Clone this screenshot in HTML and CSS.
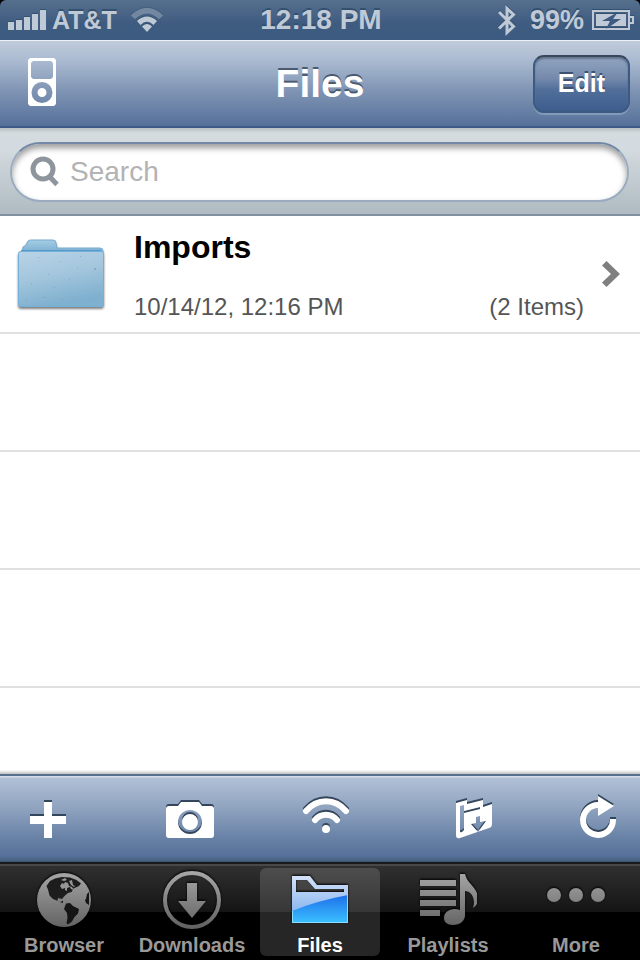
FILE: index.html
```html
<!DOCTYPE html>
<html lang="en">
<head>
<meta charset="utf-8">
<meta name="viewport" content="width=device-width, initial-scale=1">
<title>Files</title>
<link rel="stylesheet" href="styles.css">
</head>
<body>
<div class="status">
  <div class="status-side">
    <svg class="engraved" width="38" height="20" viewBox="0 0 38 20" aria-hidden="true"><path d="M0 12h6v8H0zM8 10h6v10H8zM16 7h6v13h-6zM24 4h6v16h-6zM32 0h6v20h-6z"/></svg>
    <span class="carrier">AT&amp;T</span>
    <svg class="engraved status-wifi" width="32" height="24" viewBox="0 0 32 24" aria-hidden="true">
      <path class="faded" d="M0 7.500C9-2.500 23-2.500 32 7.500L28 11C21 3.500 11 3.500 4 11z"/>
      <path d="M6 13C12 7 20 7 26 13L22.500 17C18.500 12.500 13.500 12.500 9.500 17zM11 18.500c3-3.500 7-3.500 10 0L16 24z"/>
    </svg>
  </div>
  <span class="clock">12:18 PM</span>
  <div class="status-side status-end">
    <svg class="engraved" width="18" height="31" viewBox="0 0 18 31" aria-hidden="true"><path class="blue" d="M1 7l14.500 14.500L9 27.500v-24l6.500 6L1 23.500"/></svg>
    <span class="percent">99%</span>
    <svg class="engraved" width="42" height="20" viewBox="0 0 42 20" aria-hidden="true">
      <path fill-rule="evenodd" d="M0 0h38v6h4v8h-4v6H0zM2 2v16h34V2zM38 8v4h2V8z"/>
      <path d="M4 4h30v12H4z"/>
      <path class="bolt" d="M26 2L10 11h8l-4 8 15-10h-8z"/>
    </svg>
  </div>
</div>

<header class="nav">
  <div class="nav-start">
    <button class="ipod" type="button" aria-label="Now playing">
      <svg width="28" height="48" viewBox="0 0 28 48"><path fill="#fff" fill-rule="evenodd" d="M2 0h24l2 2v44l-2 2H2l-2-2V2zM5 3L3 5v14l2 2h18l2-2V5l-2-2zM14 24a10.500 10.500 0 1 0 0 21 10.500 10.500 0 0 0 0-21zm0 6a4.500 4.500 0 1 1 0 9 4.500 4.500 0 0 1 0-9z"/></svg>
    </button>
  </div>
  <h1>Files</h1>
  <div class="nav-end"><button class="edit" type="button">Edit</button></div>
</header>

<form class="search" role="search">
  <label class="search-field">
    <svg width="30" height="32" viewBox="0 0 30 32" aria-hidden="true"><circle cx="13" cy="13" r="10"/><path d="M19.500 20.500L27 28.500"/></svg>
    <input type="search" placeholder="Search" aria-label="Search">
  </label>
</form>

<main class="files">
  <ul>
    <li><a class="row" href="#imports">
      <svg class="folder" width="90" height="72" viewBox="0 0 90 72" aria-hidden="true">
        <defs>
          <linearGradient id="front" x2=".3" y2="1"><stop stop-color="#b9d3e6"/><stop offset=".5" stop-color="#a3c6dd"/><stop offset="1" stop-color="#7fb0cf"/></linearGradient>
          <linearGradient id="back" x2="0" y2="1"><stop stop-color="#a5cde4"/><stop offset="1" stop-color="#6ea6cd"/></linearGradient>
        </defs>
        <path fill="url(#back)" stroke="#78acd0" d="M4 14l1-7 3-2 2-4q1-1 3-1h22q3 0 3 3l1 5h43q3 0 3 3v5z"/>
        <path fill="url(#front)" stroke="#74b0dc" d="M2.500 11.500h81q2 0 2 2v51q0 2-2 2h-81q-2 0-2-2v-51q0-2 2-2z"/>
        <path fill="none" stroke="#5698c7" d="M3 10.500h80"/>
        <path fill="#6f9fbd" opacity=".6" d="M20 17h1v1h-1zM42 21h1v1h-1zM62 16h1v1h-1zM76 28h2v2h-2zM30 34h1v1h-1zM51 39h1v1h-1zM13 43h1v1h-1zM68 50h1v1h-1zM25 57h2v1h-2zM8 60h1v1H8zM45 59h1v1h-1zM59 28h1v1h-1zM74 60h1v1h-1zM36 47h1v1h-1z"/>
      </svg>
      <span class="details">
        <strong>Imports</strong>
        <span class="meta"><span>10/14/12, 12:16 PM</span><span>(2 Items)</span></span>
      </span>
      <svg class="chevron" width="18" height="26" viewBox="0 0 18 26" aria-hidden="true"><path fill="#7f7f7f" d="M4.500 0L18 13 4.500 26 0 21.500 9 13 0 4.500z"/></svg>
    </a></li>
  </ul>
  <div class="empty-rows"></div>
</main>

<div class="toolbar" role="toolbar" aria-label="File actions">
  <button class="tool-add" type="button" aria-label="Add"><svg width="36" height="36" viewBox="0 0 36 36"><path d="M14 0h8v14h14v8H22v14h-8V22H0v-8h14z"/></svg></button>
  <button class="tool-camera" type="button" aria-label="Camera"><svg width="48" height="36" viewBox="0 0 48 36"><path fill-rule="evenodd" d="M12 4l3-4h18l3 4h9q3 0 3 3v26q0 3-3 3H3q-3 0-3-3V7q0-3 3-3zM24 8a12 12 0 1 0 0 24 12 12 0 0 0 0-24zm0 4a8 8 0 1 1 0 16 8 8 0 0 1 0-16z"/></svg></button>
  <button class="tool-wifi" type="button" aria-label="Wi-Fi sharing"><svg width="46" height="40" viewBox="0 0 46 40"><path class="arc" d="M3 13C14 0 32 0 43 13M12 22c6-7 16-7 22 0"/><circle cx="23" cy="31" r="4"/></svg></button>
  <button class="tool-folder" type="button" aria-label="Move to folder"><svg width="36" height="38" viewBox="0 0 36 38"><path fill-rule="evenodd" d="M0 3L11 0v4l16-4v7l9-3v20q0 3-3 4L4 38q-4 1-4-3zM4 6v25q0 2 2 1l2-2V13l16-4V7L8 11V5zM20 17v6l-5 1 7 8 8-11-6 1v-6z"/></svg></button>
  <button class="tool-reload" type="button" aria-label="Reload"><svg width="36" height="42" viewBox="0 0 36 42"><path d="M18 0l16 10-16 10v-8a12 12 0 1 0 12 11h6A18 18 0 1 1 18 6z"/></svg></button>
</div>

<nav class="tabs">
  <svg class="defs" width="0" height="0" aria-hidden="true"><defs>
    <linearGradient id="metal" gradientUnits="userSpaceOnUse" x1="0" y1="0" x2="0" y2="58"><stop stop-color="#a8a8a8"/><stop offset="1" stop-color="#606060"/></linearGradient>
  </defs></svg>
  <a class="tab" href="#browser">
    <svg width="58" height="58" viewBox="0 0 58 58"><circle cx="29" cy="29" r="27" fill="url(#metal)"/>
      <path fill="#1d1d1d" d="M11.500 15L15 10l5-2.500L27 6l8 .5L41.500 9l4.500 3.500-2 2.500-5.500 2.500-2 3.500-3.500 1-3.500 3-2.500 3-4-1-.5 3 3 1 2.500-1.500V32l-2-.5-3-1.500-5-2-3.500-3.500-1.500-6z"/>
      <path fill="#969696" d="M26 9l4-2 2 2-3 1zM25 15l2-3 2 1 1-2 3 1 1 3 3 1 2 3-3-1-1-2-3 1v3l-2-1v-2l-3 1zM34 10l3-1 1 5 2 1-1 1-3-2z"/>
      <path fill="#151515" d="M31 32.500l4-.5 3 3 6 3-1 4.500-3.500 3.500-2.500 4.500-4 3L31.500 52l1-5-.5-5-3-4zM54 21l-2 2-1 5-1 1 1 3 3 2z"/></svg>
    <span>Browser</span></a>
  <a class="tab" href="#downloads">
    <svg width="58" height="58" viewBox="0 0 58 58"><circle cx="29" cy="29" r="27" fill="none" stroke="url(#metal)" stroke-width="4"/><path fill="url(#metal)" d="M24 12h10v18h9L29 47 15 30h9z"/></svg>
    <span>Downloads</span></a>
  <a class="tab selected" href="#files" aria-current="page">
    <svg width="58" height="58" viewBox="0 0 58 58">
      <defs><linearGradient id="pale" x2="0" y2="1"><stop stop-color="#d5e2f8"/><stop offset="1" stop-color="#72a9ed"/></linearGradient><linearGradient id="glow" x2="0" y2="1"><stop stop-color="#1d70e9"/><stop offset="1" stop-color="#3bc1ff"/></linearGradient></defs>
      <path fill="url(#pale)" fill-rule="evenodd" d="M1 5h18l7 9h31v38H1zM5 9v12h48v-3H24l-8-9z"/>
      <path fill="url(#glow)" d="M1 40Q25 30 57 24v28H1z"/><path fill="none" stroke="#8adfff" d="M1.500 40v11.500h55V24"/>
    </svg>
    <span>Files</span></a>
  <a class="tab" href="#playlists">
    <svg width="58" height="58" viewBox="0 0 58 58"><path fill="url(#metal)" d="M1 9h36v6H1zM1 19h36v6H1zM1 29h36v6H1zM1 39h20v6H1zM41 3h5c2 10 13 13 13 25q0 6-5 9c3-10-2-17-8-17v24c0 6-5 10-12 10-6 0-9-3-9-7 0-7 8-11 16-8z"/></svg>
    <span>Playlists</span></a>
  <a class="tab" href="#more">
    <svg width="58" height="58" viewBox="0 0 58 58"><g fill="url(#metal)"><circle cx="7" cy="24" r="7"/><circle cx="29" cy="24" r="7"/><circle cx="51" cy="24" r="7"/></g></svg>
    <span>More</span></a>
</nav>
</body>
</html>
```

FILE: styles.css
```css
* { box-sizing: border-box; }

body {
  margin: 0;
  min-height: 100vh;
  display: flex;
  flex-direction: column;
  background: #000;
  color: #000;
  font-family: "Liberation Sans", Arial, sans-serif;
}

button {
  margin: 0;
  padding: 0;
  border: 0;
  background: none;
  font: inherit;
  cursor: pointer;
}

svg { display: block; flex: none; }
a { color: inherit; text-decoration: none; }

/* Status bar */
.status {
  display: grid;
  grid-template-columns: 1fr auto 1fr;
  align-items: center;
  height: 40px;
  padding: 0 6px 0 8px;
  border-radius: 6px 6px 0 0;
  background: linear-gradient(#566f8d, #3e5b80 60%, #3d5a80);
  color: #c0cad7;
  font-size: 28px;
  font-weight: bold;
  line-height: 40px;
  text-shadow: 0 -2px 0 #34506f;
}

.status-side { display: flex; align-items: center; gap: 8px; }
.status-end { justify-content: flex-end; }
.carrier { margin-left: -2px; font-size: 25px; }
.percent { margin-left: 6px; font-size: 27px; }
.status-wifi { margin-left: 6px; }
.engraved { fill: #c0cad7; filter: drop-shadow(0 -1px 0 #34506f); }
.faded { opacity: .4; }
.blue { fill: none; stroke: #c0cad7; stroke-width: 3; }
.bolt { fill: #3d5a80; }

/* Navigation bar */
.nav {
  display: grid;
  grid-template-columns: 1fr auto 1fr;
  align-items: center;
  height: 88px;
  padding: 0 10px;
  border-top: 1px solid #eef2f7;
  border-bottom: 2px solid #3b5a87;
  background: linear-gradient(#c0ccdb, #a8b8cf 25%, #8095b4 58%, #55709a);
}

h1 {
  margin: 0;
  color: #fff;
  font-size: 39px;
  line-height: 48px;
  text-shadow: 0 -2px 0 #4a5a71;
}

.nav-start { padding-left: 18px; }
.nav-end { display: flex; justify-content: flex-end; }

.edit {
  height: 58px;
  padding: 0 23px;
  border: 2px solid #3d5a82;
  border-top-color: #39465a;
  border-radius: 11px;
  background: linear-gradient(#92a5c1, #7489ab 40%, #526f9a 60%, #3d5d8e);
  box-shadow: 0 2px 0 #8499b8, inset 0 2px 2px #63748f;
  color: #fff;
  font-size: 25px;
  font-weight: bold;
  text-shadow: 0 -2px 0 #3c5070;
}

/* Search */
.search {
  height: 88px;
  padding: 14px 11px 12px 10px;
  border-bottom: 2px solid #8190a0;
  background: linear-gradient(#b9c0c6, #d5dcdf 5px, #d3dae0 25%, #afbbc1);
}

.search-field {
  display: flex;
  align-items: center;
  gap: 10px;
  height: 60px;
  padding: 0 18px;
  border: 2px solid #9aabc0;
  border-top-color: #7288a4;
  border-radius: 30px;
  background: #fff;
  box-shadow: inset 0 4px 6px rgba(0, 0, 0, .4);
}

.search-field svg { fill: none; stroke: #8e959c; stroke-width: 5; }

.search-field input {
  flex: 1;
  min-width: 0;
  padding: 0;
  border: 0;
  outline: 0;
  background: transparent;
  color: #000;
  font: 28px/40px "Liberation Sans", Arial, sans-serif;
}

.search-field input::placeholder { color: #b3b3b3; opacity: 1; }

/* File list */
.files { flex: 1; display: flex; flex-direction: column; background: #fff; }
ul { margin: 0; padding: 0; list-style: none; }

.row {
  display: flex;
  align-items: center;
  height: 118px;
  padding: 4px 20px 0 18px;
  border-bottom: 2px solid #e0e0e0;
}

.folder { overflow: visible; filter: drop-shadow(0 2px 1px rgba(0, 0, 0, .5)); }
.chevron { margin-bottom: 4px; }

.details {
  flex: 1;
  display: flex;
  flex-direction: column;
  gap: 26px;
  margin: 0 18px 0 26px;
}

.details strong { font-size: 32px; line-height: 36px; }

.meta {
  display: flex;
  justify-content: space-between;
  color: #555;
  font-size: 24px;
  line-height: 32px;
}

.empty-rows {
  flex: 1;
  background:
    linear-gradient(transparent, rgba(0, 0, 0, .25)) bottom / 100% 4px no-repeat,
    repeating-linear-gradient(#fff 0 116px, #e0e0e0 116px 118px);
}

/* Toolbar */
.toolbar {
  display: flex;
  align-items: flex-end;
  justify-content: space-between;
  height: 88px;
  padding: 0 24px 23px 0;
  border-top: 2px solid #58708f;
  border-bottom: 1px solid #3c5575;
  background: linear-gradient(#d3dce8 0 1px, #b1c0d6 2px, #8fa3bf 38%, #6d86a9 68%, #55709a 94%, #48617f);
}

.toolbar button { display: flex; justify-content: center; }
.toolbar svg { overflow: visible; fill: #fff; filter: drop-shadow(0 -2px 0 #34465c); }
.toolbar .tool-add { width: 96px; }
.toolbar .tool-camera { width: 48px; }
.toolbar .tool-wifi { width: 84px; }
.toolbar .tool-folder { width: 72px; }
.toolbar .tool-reload { width: 36px; }
.arc { fill: none; stroke: #fff; stroke-width: 6; stroke-linecap: round; }

/* Tab bar */
.tabs {
  display: flex;
  height: 98px;
  border-top: 2px solid #1a1a1a;
  background: linear-gradient(#484848 0 2px, #303030 2px, #141414 48px, #000 48px);
}

.defs { position: absolute; }

.tab {
  flex: 1;
  display: flex;
  flex-direction: column;
  align-items: center;
  gap: 4px;
  margin: 4px;
  padding-top: 3px;
  border-radius: 6px;
  color: #999;
  font-size: 20px;
  font-weight: bold;
  line-height: 24px;
}

.tab svg { filter: drop-shadow(0 -1px 1px #000); }
.selected { background: rgba(255, 255, 255, .15); color: #fff; }
```
